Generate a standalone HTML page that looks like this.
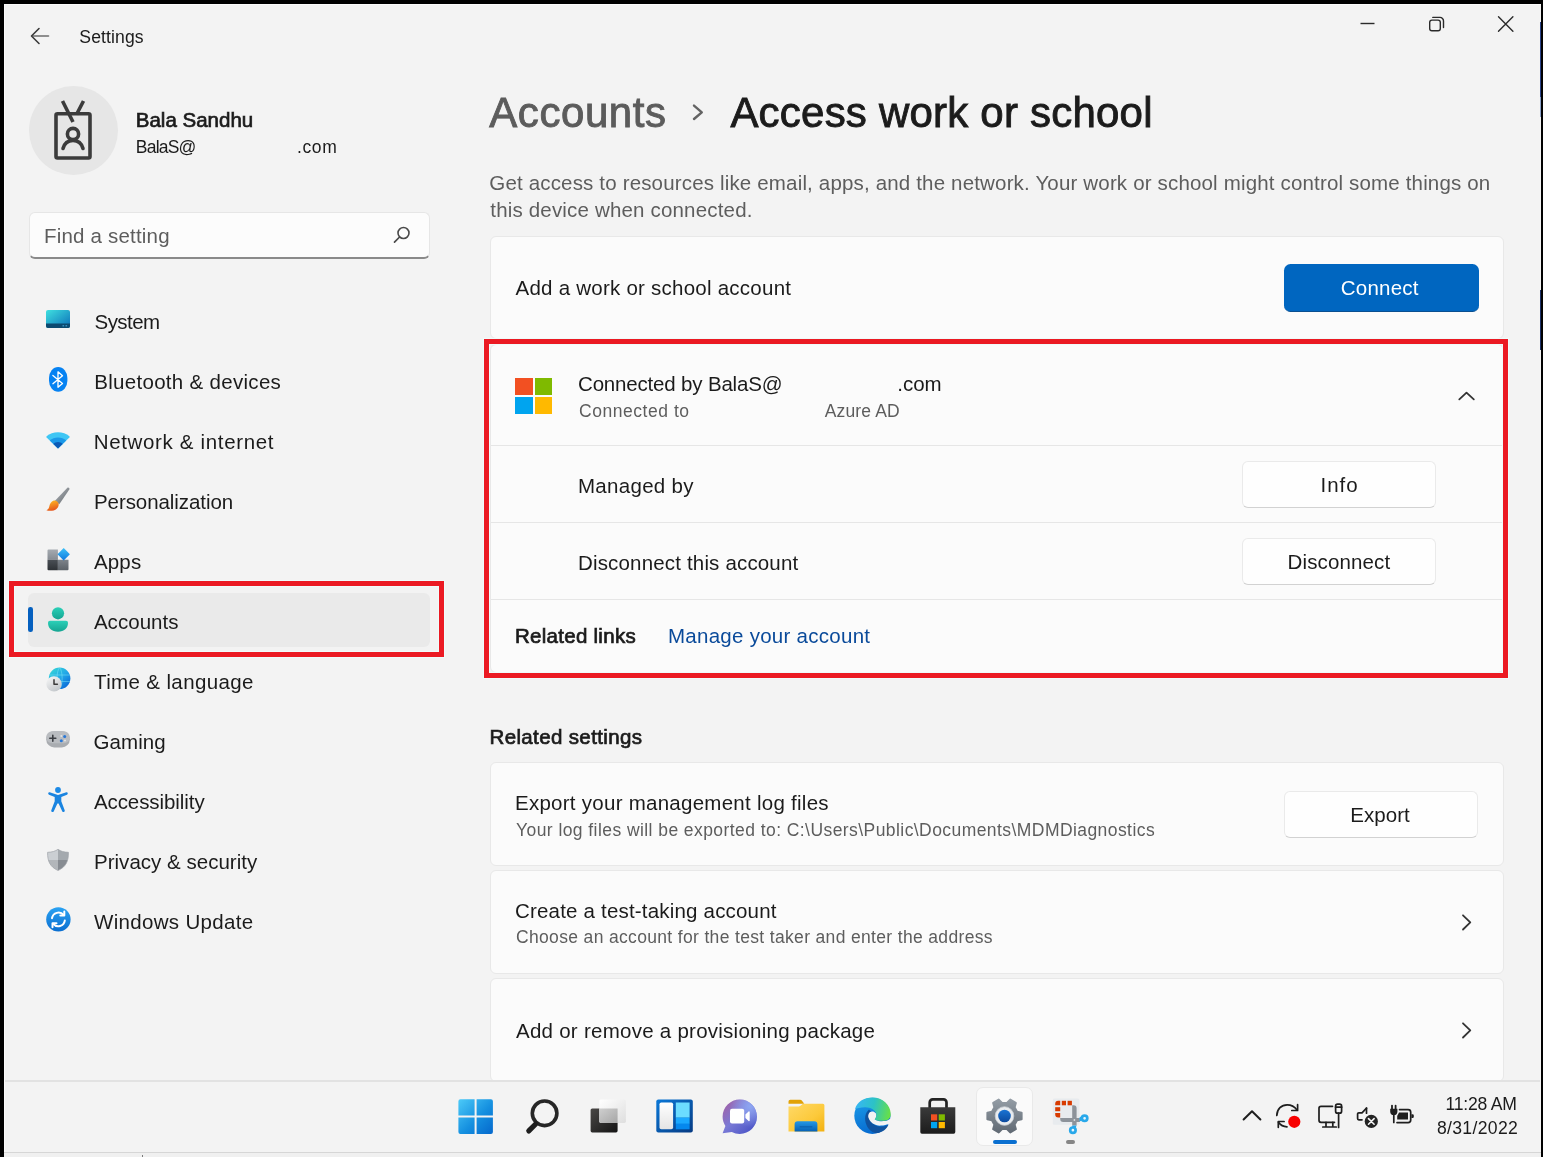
<!DOCTYPE html>
<html lang="en">
<head>
<meta charset="utf-8">
<title>Settings - Access work or school</title>
<style>
html,body{margin:0;padding:0;background:#f3f3f3;}
body{width:1543px;height:1157px;overflow:hidden;font-family:"Liberation Sans",sans-serif;}
#root{position:relative;width:1543px;height:1157px;overflow:hidden;background:#f3f3f3;}
#root>*{position:absolute;box-sizing:border-box;}
#txt{left:0;top:0;width:1543px;height:1157px;will-change:transform;filter:blur(0.45px);}
.t{position:absolute;white-space:pre;line-height:1;font-family:"Liberation Sans",sans-serif;}
.card{background:#fbfbfb;border:1px solid #e8e8e8;border-radius:6px;}
.btn{background:#fefefe;border:1px solid #eaeaea;border-bottom-color:#d2d2d2;border-radius:6px;}
.red{border:5px solid #eb1a23;box-shadow:0 0 0 1px rgba(240,252,252,.9),inset 0 0 0 1px rgba(240,252,252,.9);}
svg{display:block;overflow:visible;}
</style>
</head>
<body>
<div id="root">
<!-- window frame -->
<div style="left:0;top:0;width:1543px;height:4px;background:#000"></div>
<div style="left:0;top:0;width:4px;height:1157px;background:#000"></div>
<div style="left:1541px;top:0;width:2px;height:1157px;background:#000"></div>
<div style="left:4px;top:4px;width:1537px;height:1px;background:#fbfbfb"></div>
<div style="left:4px;top:4px;width:1px;height:1149px;background:#fbfbfb"></div>
<div style="left:1540px;top:22px;width:1px;height:75px;background:#2a4288"></div>
<div style="left:1540px;top:97px;width:1px;height:20px;background:#8aa0c8"></div>
<div style="left:1540px;top:290px;width:1px;height:60px;background:#1c3068"></div>
<!-- back arrow -->
<svg style="left:29px;top:26px" width="22" height="20" viewBox="0 0 22 20"><path d="M19.5 10H4" fill="none" stroke="#6e6e6e" stroke-width="1.6" stroke-linecap="round"/><path d="M10 2.5L2.5 10l7.5 7.5" fill="none" stroke="#3a3a3a" stroke-width="1.6" stroke-linecap="round" stroke-linejoin="round"/></svg>
<!-- caption buttons -->
<svg style="left:1359px;top:14.600px" width="18" height="18" viewBox="0 0 18 18"><path d="M1.500 8.500h14" stroke="#2a2a2a" stroke-width="1.400" fill="none"/></svg>
<svg style="left:1428px;top:15px" width="18" height="18" viewBox="0 0 18 18"><rect x="1.700" y="5.100" width="10.600" height="10.700" rx="2.200" fill="none" stroke="#2a2a2a" stroke-width="1.400"/><path d="M4.800 2.400h7.200a3.500 3.500 0 0 1 3.500 3.500V12.600" fill="none" stroke="#2a2a2a" stroke-width="1.400" stroke-linecap="round"/></svg>
<svg style="left:1497px;top:15px" width="18" height="18" viewBox="0 0 18 18"><path d="M1.500 1.800l14.400 14.400M15.900 1.800l-14.400 14.400" stroke="#2a2a2a" stroke-width="1.400" stroke-linecap="round" fill="none"/></svg>
<!-- avatar -->
<div style="left:28.500px;top:85.500px;width:89px;height:89px;border-radius:50%;background:#e6e6e6"></div>
<svg style="left:50px;top:97px" width="46" height="66" viewBox="0 0 46 66">
  <g fill="none" stroke="#3b3b3b" stroke-width="3.600" stroke-linejoin="round" stroke-linecap="butt">
    <rect x="6" y="16.800" width="34" height="44.200" rx="1.500"/>
    <path d="M12.500 4l10.500 21M33.500 4l-7 13.500"/>
    <circle cx="23" cy="37" r="5.600"/>
    <path d="M13 51.500c1.500-5.500 5.500-8 10-8s8.500 2.500 10 8" stroke-linecap="round"/>
  </g>
</svg>
<!-- search box -->
<div style="left:29px;top:212px;width:400.500px;height:46.500px;background:#fcfcfc;border:1px solid #e6e6e6;border-bottom:2px solid #8a8a8a;border-radius:6px"></div>
<svg style="left:392px;top:225px" width="20" height="20" viewBox="0 0 20 20"><circle cx="11.500" cy="8" r="5.500" fill="none" stroke="#4a4a4a" stroke-width="1.600"/><path d="M7.600 12L2.500 17.200" stroke="#4a4a4a" stroke-width="1.700" stroke-linecap="round"/></svg>
<!-- selected nav item -->
<div style="left:28px;top:592.500px;width:402px;height:54px;background:#eaeaea;border-radius:6px"></div>
<div style="left:28px;top:607.200px;width:4.600px;height:24.400px;background:#0560bf;border-radius:2.300px"></div>
<div class="red" style="left:9px;top:581px;width:435px;height:76px"></div>
<!-- nav icons -->
<!-- system -->
<svg style="left:46px;top:310px" width="24" height="18" viewBox="0 0 24 18"><defs><linearGradient id="gsys" x1="0" y1="0" x2="1" y2="1"><stop offset="0" stop-color="#3fe0e0"/><stop offset="1" stop-color="#0b6fb8"/></linearGradient></defs><rect x="0" y="0" width="24" height="18" rx="2" fill="url(#gsys)"/><path d="M0 13.500h24V16a2 2 0 0 1-2 2H2a2 2 0 0 1-2-2z" fill="#0c4a70"/><rect x="16.500" y="15.200" width="1.600" height="1.200" fill="#3fa0d0"/><rect x="19.500" y="15.200" width="1.600" height="1.200" fill="#3fa0d0"/></svg>
<!-- bluetooth -->
<svg style="left:48.800px;top:366.900px" width="18.400" height="24.800" viewBox="0 0 18.400 24.800"><rect x="0" y="0" width="18.400" height="24.800" rx="9.200" ry="11" fill="#0682f2"/><path d="M3.900 8.500L13.500 16.500 9 20.200V4.800L13.500 8.800 3.900 16.700" fill="none" stroke="#fff" stroke-width="1.350" stroke-linejoin="round" stroke-linecap="round"/></svg>
<!-- network -->
<svg style="left:46px;top:431.500px" width="24" height="17" viewBox="0 0 24 17"><path d="M12 16.400L0.600 5.600C0.200 5.200 0.200 4.600 0.600 4.200 3.600 1.600 7.600 0.200 12 0.200s8.400 1.400 11.400 4c0.400 0.400 0.400 1 0 1.400z" fill="#3ec6f4"/><path d="M12 16.400L3.800 8.600C6 6.600 8.800 5.400 12 5.400s6 1.200 8.200 3.200z" fill="#1a98e8"/><path d="M12 16.400L7.400 12c1.200-1.200 2.800-1.900 4.600-1.900s3.400 0.700 4.600 1.900z" fill="#0a5ab6"/></svg>
<!-- personalization -->
<svg style="left:46px;top:487px" width="25" height="25" viewBox="0 0 25 25"><defs><linearGradient id="gbr1" x1="0" y1="0" x2="1" y2="1"><stop offset="0" stop-color="#b4b9be"/><stop offset="1" stop-color="#62676c"/></linearGradient><linearGradient id="gbr2" x1="0.300" y1="0" x2="0.600" y2="1"><stop offset="0" stop-color="#ffb824"/><stop offset="1" stop-color="#e4501c"/></linearGradient></defs><path d="M21.400 0.800c0.900-0.900 2.600 0.400 1.900 1.600L13.300 17.200l-4.600-3.300z" fill="url(#gbr1)"/><path d="M7.800 13.600c2-0.500 4.400 1 4.800 3.200 0.500 2.900-1.500 5.600-4.900 6.600-2.600 0.700-5.600 0.600-7.300-0.200 1.600-0.600 2.400-1.600 2.800-3.400 0.500-2.600 1.800-5.500 4.600-6.200z" fill="url(#gbr2)"/></svg>
<!-- apps -->
<svg style="left:47px;top:547px" width="24" height="24" viewBox="0 0 24 24"><defs><linearGradient id="gap1" x1="0" y1="0" x2="0" y2="1"><stop offset="0" stop-color="#a6abb1"/><stop offset="1" stop-color="#858b92"/></linearGradient><linearGradient id="gap2" x1="0" y1="0" x2="0" y2="1"><stop offset="0" stop-color="#4a4f55"/><stop offset="1" stop-color="#2e3236"/></linearGradient><linearGradient id="gap3" x1="0" y1="0" x2="0" y2="1"><stop offset="0" stop-color="#7d838a"/><stop offset="1" stop-color="#5c6268"/></linearGradient><linearGradient id="gap4" x1="0" y1="0" x2="0" y2="1"><stop offset="0" stop-color="#3cc0f8"/><stop offset="1" stop-color="#0d78de"/></linearGradient></defs><path d="M0.500 3.400a1 1 0 0 1 1-1h9.400v10.400H0.500z" fill="url(#gap1)"/><path d="M0.500 12.800h10.400v10.400H1.500a1 1 0 0 1-1-1z" fill="url(#gap2)"/><path d="M10.900 12.800h10.600v9.400a1 1 0 0 1-1 1H10.900z" fill="url(#gap3)"/><path d="M16.700 1.100l6.200 6.200-6.200 6.200-6.200-6.200z" fill="url(#gap4)"/></svg>
<!-- accounts -->
<svg style="left:47px;top:607px" width="22" height="25" viewBox="0 0 22 25"><defs><linearGradient id="gacc" x1="0" y1="0" x2="0" y2="1"><stop offset="0" stop-color="#2bd0b8"/><stop offset="1" stop-color="#16a592"/></linearGradient></defs><circle cx="11" cy="6.300" r="6.100" fill="url(#gacc)"/><path d="M3 13.800h16a2 2 0 0 1 2 2c0 5.400-3.800 8.900-10 8.900S1 21.200 1 15.800a2 2 0 0 1 2-2z" fill="url(#gacc)"/></svg>
<!-- time & language -->
<svg style="left:46px;top:666.500px" width="25" height="25" viewBox="0 0 25 25"><defs><linearGradient id="gtl" x1="0.150" y1="0.100" x2="0.850" y2="0.900"><stop offset="0" stop-color="#34d0d8"/><stop offset="0.500" stop-color="#22a8e8"/><stop offset="1" stop-color="#0c6cd8"/></linearGradient><linearGradient id="gtl2" x1="0" y1="0" x2="0.600" y2="1"><stop offset="0" stop-color="#fafafa"/><stop offset="1" stop-color="#c4c8cc"/></linearGradient></defs><circle cx="13.600" cy="11.300" r="10.800" fill="url(#gtl)"/><path d="M13.600 0.500c-3.400 3.400-3.400 18.200 0 21.600M13.600 0.500c3.400 3.400 3.400 18.200 0 21.600M3.400 8h20.500M3.600 14.500h20.300" fill="none" stroke="#7fe4f4" stroke-width="0.900" opacity="0.550"/><circle cx="8" cy="16.900" r="7.700" fill="url(#gtl2)"/><path d="M8 12.800v4.400h3.400" fill="none" stroke="#3a3a3a" stroke-width="1.500" stroke-linecap="round" stroke-linejoin="round"/></svg>
<!-- gaming -->
<svg style="left:46px;top:731px" width="24" height="17" viewBox="0 0 24 17"><rect x="0.200" y="0.200" width="23.600" height="16.200" rx="8" fill="#a9acb0"/><rect x="0.200" y="0.200" width="23.600" height="12" rx="6" fill="#b9bcc0"/><path d="M6.800 4.300v6M3.800 7.300h6" stroke="#3c3f44" stroke-width="1.600" stroke-linecap="round"/><circle cx="15.300" cy="9.800" r="1.500" fill="#2878d8"/><circle cx="18.700" cy="5.500" r="1.500" fill="#2878d8"/><circle cx="15.300" cy="5" r="1" fill="#e4e4e4"/><circle cx="19" cy="9.500" r="1" fill="#e4e4e4"/></svg>
<!-- accessibility -->
<svg style="left:48px;top:786.500px" width="20" height="26" viewBox="0 0 20 26"><circle cx="10" cy="3" r="2.900" fill="#1c8ae6"/><path d="M1.700 5.300c-1.400-0.500-2.200 1.800-0.700 2.400l5.700 2.300v4.200l-3.400 9c-0.600 1.700 1.800 2.600 2.500 1L9.400 16.500h1.200l3.600 7.700c0.700 1.600 3.100 0.700 2.500-1l-3.400-9V10l5.700-2.300c1.500-0.600 0.700-2.900-0.700-2.400L10 8z" fill="#1a84e0"/></svg>
<!-- privacy -->
<svg style="left:47px;top:848.500px" width="22" height="22" viewBox="0 0 22 22"><defs><clipPath id="cpv"><path d="M11 0.300c2.800 2 6 2.900 10.400 3 0.300 8.800-2.600 14.800-10.400 18.200C3.200 18.100 0.300 12.100 0.600 3.300 5 3.200 8.200 2.300 11 0.300z"/></clipPath></defs><g clip-path="url(#cpv)"><rect x="0" y="0" width="11" height="11" fill="#cbcfd3"/><rect x="11" y="0" width="11" height="11" fill="#a4a9ae"/><rect x="0" y="11" width="11" height="11" fill="#b2b6ba"/><rect x="11" y="11" width="11" height="11" fill="#878c92"/></g><path d="M11 0.300c2.800 2 6 2.900 10.400 3 0.300 8.800-2.600 14.800-10.400 18.200C3.200 18.100 0.300 12.100 0.600 3.300 5 3.200 8.200 2.300 11 0.300z" fill="none" stroke="#9da2a8" stroke-width="0.700"/></svg>
<!-- windows update -->
<svg style="left:45.500px;top:907px" width="25" height="25" viewBox="0 0 25 25"><defs><linearGradient id="gwu" x1="0" y1="0" x2="0" y2="1"><stop offset="0" stop-color="#2aa2f2"/><stop offset="1" stop-color="#0a6ed0"/></linearGradient></defs><circle cx="12.400" cy="12.400" r="12.200" fill="url(#gwu)"/><path d="M6 11.200a6.600 6.600 0 0 1 11.600-3.200M18.800 13.600a6.600 6.600 0 0 1-11.600 3.200" fill="none" stroke="#fff" stroke-width="2" stroke-linecap="round"/><path d="M18.300 4.600v4h-4M6.500 20.200v-4h4" fill="none" stroke="#fff" stroke-width="2" stroke-linecap="round" stroke-linejoin="round"/></svg>
<!-- heading chevron -->
<svg style="left:690px;top:102px" width="16" height="21" viewBox="0 0 16 21"><path d="M4 3.600L11.800 10.300 4 17" fill="none" stroke="#636363" stroke-width="2.400" stroke-linecap="round" stroke-linejoin="round"/></svg>
<!-- card 1 -->
<div class="card" style="left:490.400px;top:235.800px;width:1013.500px;height:103.500px"></div>
<div style="left:1283.500px;top:264px;width:195px;height:48px;background:#0066c0;border-radius:6.500px;border-bottom:1.500px solid #0a4f90"></div>
<!-- expander card -->
<div class="card" style="left:490.400px;top:343.800px;width:1013.500px;height:329px"></div>
<div style="left:491.400px;top:444.900px;width:1011.500px;height:1.300px;background:#e6e6e6"></div>
<div style="left:491.400px;top:521.900px;width:1011.500px;height:1.300px;background:#e6e6e6"></div>
<div style="left:491.400px;top:598.600px;width:1011.500px;height:1.300px;background:#e6e6e6"></div>
<div class="red" style="left:484px;top:339px;width:1024px;height:339px"></div>
<!-- microsoft logo -->
<div style="left:515px;top:378px;width:17.500px;height:17px;background:#f25022"></div>
<div style="left:534.500px;top:378px;width:17.500px;height:17px;background:#7fba00"></div>
<div style="left:515px;top:397px;width:17.500px;height:17px;background:#00a4ef"></div>
<div style="left:534.500px;top:397px;width:17.500px;height:17px;background:#ffb900"></div>
<!-- chevron up -->
<svg style="left:1456px;top:389px" width="22" height="14" viewBox="0 0 22 14"><path d="M3.300 10.300L10.500 3.600 17.800 10.300" fill="none" stroke="#333" stroke-width="1.800" stroke-linecap="round" stroke-linejoin="round"/></svg>
<!-- buttons -->
<div class="btn" style="left:1241.900px;top:460.800px;width:194.600px;height:47.500px"></div>
<div class="btn" style="left:1241.900px;top:537.500px;width:194.600px;height:47.500px"></div>
<!-- related settings cards -->
<div class="card" style="left:490.400px;top:762px;width:1013.500px;height:103.500px"></div>
<div class="btn" style="left:1283.700px;top:790.700px;width:194.300px;height:47.400px"></div>
<div class="card" style="left:490.400px;top:870px;width:1013.500px;height:103.500px"></div>
<svg style="left:1458px;top:912px" width="16" height="22" viewBox="0 0 16 22"><path d="M5 3.300L12.300 10.400 5 17.500" fill="none" stroke="#333" stroke-width="1.800" stroke-linecap="round" stroke-linejoin="round"/></svg>
<div class="card" style="left:490.400px;top:978px;width:1013.500px;height:103.500px"></div>
<svg style="left:1458px;top:1020px" width="16" height="22" viewBox="0 0 16 22"><path d="M5 3.300L12.300 10.400 5 17.500" fill="none" stroke="#333" stroke-width="1.800" stroke-linecap="round" stroke-linejoin="round"/></svg>
<!-- taskbar -->
<div style="left:5px;top:1080.500px;width:1535px;height:76.500px;background:#f3f3f3"></div>
<div style="left:5px;top:1080.300px;width:1535px;height:1.300px;background:#e2e2e2"></div>
<div style="left:4px;top:1152px;width:1537px;height:1px;background:#d6d6d6"></div>
<div style="left:4px;top:1153px;width:1537px;height:4px;background:#f0f0f0"></div>
<div style="left:142px;top:1155px;width:1px;height:2px;background:#7a7a7a"></div>
<!-- start -->
<svg style="left:458px;top:1099px" width="36" height="36" viewBox="0 0 36 36"><defs><linearGradient id="gst" x1="0" y1="0" x2="1" y2="1"><stop offset="0" stop-color="#4ccaf8"/><stop offset="0.550" stop-color="#1590e0"/><stop offset="1" stop-color="#0568cc"/></linearGradient></defs><path d="M2.400 0.300h14.200v16.300H0.400V2.300a2 2 0 0 1 2-2zM18.600 0.300h14.300a2 2 0 0 1 2 2v14.300H18.600zM0.400 18.500h16.200v16.400H2.400a2 2 0 0 1-2-2zM18.600 18.500h16.300v14.400a2 2 0 0 1-2 2H18.600z" fill="url(#gst)"/></svg>
<!-- search -->
<svg style="left:524px;top:1097px" width="38" height="38" viewBox="0 0 38 38"><circle cx="20.600" cy="16.300" r="12.300" fill="none" stroke="#262626" stroke-width="3.600"/><path d="M11.700 27L4.800 33.900" stroke="#1e1e1e" stroke-width="5.200" stroke-linecap="round"/></svg>
<!-- task view -->
<svg style="left:590px;top:1099px" width="37" height="34" viewBox="0 0 37 34"><defs><linearGradient id="gtv1" x1="0" y1="0" x2="1" y2="1"><stop offset="0" stop-color="#4a4846"/><stop offset="1" stop-color="#141414"/></linearGradient><linearGradient id="gtv2" x1="0" y1="0" x2="1" y2="1"><stop offset="0" stop-color="#ffffff"/><stop offset="1" stop-color="#dedede"/></linearGradient><linearGradient id="gtv3" x1="0" y1="0" x2="1" y2="1"><stop offset="0" stop-color="#cfcfcf"/><stop offset="1" stop-color="#a6a6a6"/></linearGradient></defs><rect x="0.600" y="9.400" width="27" height="24" rx="1.600" fill="url(#gtv1)"/><rect x="9.300" y="0.500" width="26.600" height="23.400" rx="1.600" fill="url(#gtv2)"/><path d="M9.300 9.400h18.300v14.500H10.900a1.600 1.600 0 0 1-1.600-1.600z" fill="url(#gtv3)"/></svg>
<!-- widgets -->
<svg style="left:656px;top:1099px" width="37" height="34" viewBox="0 0 37 34"><defs><linearGradient id="gwd" x1="0" y1="0" x2="1" y2="1"><stop offset="0" stop-color="#0a78d8"/><stop offset="1" stop-color="#063a82"/></linearGradient><linearGradient id="gwd2" x1="0" y1="0" x2="0" y2="1"><stop offset="0" stop-color="#ffffff"/><stop offset="1" stop-color="#e4e4e4"/></linearGradient></defs><rect x="0.300" y="0.500" width="36.500" height="33" rx="2" fill="url(#gwd)"/><rect x="3.500" y="3.500" width="13.600" height="26.800" rx="1.800" fill="url(#gwd2)"/><rect x="19.800" y="3.500" width="13.800" height="15.200" fill="#6cdcff"/><rect x="19.800" y="18.600" width="13.800" height="6.300" fill="#1aa8ff"/><rect x="19.800" y="24.800" width="13.800" height="5.500" fill="#0588ee"/></svg>
<!-- chat -->
<svg style="left:721px;top:1098.600px" width="38" height="36" viewBox="0 0 38 36"><defs><linearGradient id="gch" x1="0.150" y1="0.150" x2="0.850" y2="0.850"><stop offset="0" stop-color="#9a66b0"/><stop offset="0.450" stop-color="#7a7ad6"/><stop offset="1" stop-color="#5058c8"/></linearGradient><radialGradient id="gch2" cx="0.800" cy="0.200" r="0.600"><stop offset="0" stop-color="#8ea6f2"/><stop offset="1" stop-color="#8ea6f2" stop-opacity="0"/></radialGradient></defs><path d="M18.800 0.600c9.500 0 17.200 7.700 17.200 17.200S28.300 35 18.800 35c-2.900 0-5.600-0.700-8-2L1.600 34.200l2.800-7.200C2.600 24.300 1.600 21.200 1.600 17.800 1.600 8.300 9.300 0.600 18.800 0.600z" fill="url(#gch)"/><path d="M18.800 0.600c9.500 0 17.200 7.700 17.200 17.200S28.300 35 18.800 35c-2.900 0-5.600-0.700-8-2L1.600 34.200l2.800-7.200C2.600 24.300 1.600 21.200 1.600 17.800 1.600 8.300 9.300 0.600 18.800 0.600z" fill="url(#gch2)"/><rect x="9" y="9.800" width="14.200" height="14.600" rx="2" fill="#fff"/><path d="M24.400 15.400l3.200-3c0.400-0.400 1.100-0.100 1.100 0.500v8.600c0 0.600-0.700 0.900-1.100 0.500l-3.200-3z" fill="#fff"/></svg>
<!-- explorer -->
<svg style="left:788px;top:1099px" width="37" height="33" viewBox="0 0 37 33"><defs><linearGradient id="gex" x1="0" y1="0" x2="1" y2="1"><stop offset="0" stop-color="#ffd968"/><stop offset="0.600" stop-color="#fcc93a"/><stop offset="1" stop-color="#f2b010"/></linearGradient><linearGradient id="gex2" x1="0" y1="0" x2="0" y2="1"><stop offset="0" stop-color="#2498e6"/><stop offset="1" stop-color="#0560b4"/></linearGradient></defs><path d="M0.500 2.600a1.800 1.800 0 0 1 1.800-1.800h9.800c0.700 0 1.300 0.300 1.700 0.800l2.500 3.200H0.500z" fill="#e2a206"/><path d="M0.500 7.400h10.400c0.800 0 1.500-0.300 2-0.800l2-1.900h20a1.500 1.500 0 0 1 1.500 1.500v26.400H0.500z" fill="url(#gex)"/><path d="M6.600 32.600v-7.400a3 3 0 0 1 3-3h16.800a3 3 0 0 1 3 3v7.400z" fill="url(#gex2)"/><rect x="11.500" y="27" width="13" height="1.600" rx="0.800" fill="#0a58a4" opacity="0.600"/></svg>
<!-- edge -->
<svg style="left:854px;top:1097px" width="37" height="38" viewBox="0 0 37 38"><defs><linearGradient id="ged1" x1="0" y1="0.400" x2="1" y2="0.550"><stop offset="0" stop-color="#38b6f4"/><stop offset="0.500" stop-color="#2cc2c6"/><stop offset="0.800" stop-color="#4fd47a"/><stop offset="1" stop-color="#68e046"/></linearGradient><linearGradient id="ged2" x1="0.200" y1="0" x2="0.500" y2="1"><stop offset="0" stop-color="#1c9ce8"/><stop offset="1" stop-color="#066ad0"/></linearGradient></defs><circle cx="18.400" cy="18.800" r="18.100" fill="url(#ged2)"/><path d="M15 12.500C11 16 10 22 12.500 28c2 5 6.500 8.500 11.500 8 5-1 9-4.500 10.500-8.500-4.500 3-10.500 3-14.500 0S14.500 19 17 14.500z" fill="#10529e"/><path d="M18.100 14.400c-3.100 0-4.500 3.600-3.500 6.600 1.400 4.500 6.400 8 12.400 7.600 3-0.200 6-1 7.200-1.400l3.800 0.300v-6.800l-4.200 2.500c-3.800 1.300-9.800 1.400-12.800-0.800 1.500-1.900 1.800-4.400 1-5.800-1-1.600-2.400-2.200-3.900-2.200z" fill="#f3f3f3"/><path d="M1 12C3 5 10 0.600 18.500 0.600c10 0 18 7.400 18.200 16.400 0.100 4-2.200 6.500-6.700 6.800-4 0.200-8-0.400-9.400-1.400 1.400-1.600 2.200-3.900 1.600-5.800C21 13 16.500 10.200 11 10.300 6.500 10.400 3 11.300 1 12z" fill="url(#ged1)"/></svg>
<!-- store -->
<svg style="left:920px;top:1097px" width="36" height="38" viewBox="0 0 36 38"><defs><linearGradient id="gsto" x1="0" y1="0" x2="0" y2="1"><stop offset="0" stop-color="#3a3a3a"/><stop offset="1" stop-color="#1c1c1c"/></linearGradient></defs><path d="M9.700 11.500V5.400a3 3 0 0 1 3-3h10.800a3 3 0 0 1 3 3v6.100" fill="none" stroke="#232323" stroke-width="2.700"/><path d="M0.300 10.200h35v24.900a1.600 1.600 0 0 1-1.600 1.600H1.900a1.600 1.600 0 0 1-1.600-1.600z" fill="url(#gsto)"/><rect x="11" y="17.300" width="6.200" height="6.200" fill="#f25022"/><rect x="18.700" y="17.300" width="6.200" height="6.200" fill="#7fba00"/><rect x="11" y="25" width="6.200" height="6.200" fill="#00a4ef"/><rect x="18.700" y="25" width="6.200" height="6.200" fill="#ffb900"/></svg>
<!-- settings (active) -->
<div style="left:975.500px;top:1087px;width:57.500px;height:58.500px;background:#fafafa;border:1px solid #e9e9e9;border-radius:7px"></div>
<svg style="left:985px;top:1097px" width="39" height="38" viewBox="-19.500 -19 39 38"><defs><linearGradient id="ggr" gradientUnits="userSpaceOnUse" x1="0" y1="-18" x2="0" y2="18"><stop offset="0" stop-color="#959ea7"/><stop offset="1" stop-color="#5f6872"/></linearGradient><linearGradient id="ggr2" x1="0" y1="0" x2="0" y2="1"><stop offset="0" stop-color="#1a74d4"/><stop offset="1" stop-color="#0c4a9e"/></linearGradient></defs><path d="M2.52 -12.96L5.77 -16.31L11.24 -13.16L9.96 -8.66L12.48 -4.30L17.01 -3.15L17.01 3.15L12.48 4.30L9.96 8.66L11.24 13.16L5.77 16.31L2.52 12.96L-2.52 12.96L-5.77 16.31L-11.24 13.16L-9.96 8.66L-12.48 4.30L-17.01 3.15L-17.01 -3.15L-12.48 -4.30L-9.96 -8.66L-11.24 -13.16L-5.77 -16.31L-2.52 -12.96Z" fill="url(#ggr)" stroke="url(#ggr)" stroke-width="2.200" stroke-linejoin="round"/><circle r="9.300" fill="#e9ecef"/><circle r="9.300" fill="none" stroke="#c9ced4" stroke-width="0.800"/><circle r="6.300" fill="url(#ggr2)"/></svg>
<div style="left:992.500px;top:1140px;width:24px;height:4.400px;border-radius:2.200px;background:#0a6fd0"></div>
<!-- snipping tool -->
<svg style="left:1052px;top:1098px" width="38" height="37" viewBox="0 0 38 37"><rect x="0.800" y="0.500" width="26.500" height="26.200" rx="1.500" fill="#e8ebee"/><g fill="#d83b01"><path d="M3.200 7.300V5.800a3 3 0 0 1 3-3h2v4.500z"/><rect x="9.800" y="2.800" width="4.200" height="4.500"/><rect x="15.600" y="2.800" width="4.300" height="4.500"/><rect x="3.200" y="9.200" width="5" height="4"/><path d="M3.200 15.100h5v4.500h-2a3 3 0 0 1-3-3z"/></g><path d="M20.200 7.300h1.400a3 3 0 0 1 3 3v17.300h-4.400z" fill="#8d939a"/><path d="M8.200 20h19.700v4H11.200a3 3 0 0 1-3-3z" fill="#8d939a"/><circle cx="22.400" cy="22" r="0.900" fill="#d9dde1"/><circle cx="32.600" cy="20.300" r="2.700" fill="#eaf6fd" stroke="#28a8ea" stroke-width="2.700"/><circle cx="20.900" cy="32.200" r="2.700" fill="#eaf6fd" stroke="#28a8ea" stroke-width="2.700"/><path d="M27.500 19.500l2.500-1.500v4.500l-2.500 1zM20.200 27.500h4.400l-1 2.500h-3z" fill="#28a8ea"/></svg>
<div style="left:1066px;top:1140px;width:9px;height:4.400px;border-radius:2.200px;background:#868686"></div>
<!-- tray chevron -->
<svg style="left:1241px;top:1108px" width="22" height="14" viewBox="0 0 22 14"><path d="M2.600 11.500L11 3.200l8.400 8.300" fill="none" stroke="#1e1e1e" stroke-width="2" stroke-linecap="round" stroke-linejoin="round"/></svg>
<!-- sync -->
<svg style="left:1274px;top:1102px" width="28" height="28" viewBox="0 0 28 28"><g fill="none" stroke="#1e1e1e" stroke-width="1.700" stroke-linecap="round" stroke-linejoin="round"><path d="M2.800 13.500C3 7 7.500 2.800 13.200 2.800c4 0 7.400 1.900 9.600 5"/><path d="M23.600 2.700v5.800h-5.800"/><path d="M13 24.800c-3.600 0-6.600-1.700-8.500-4.500"/><path d="M4.300 25.300v-5.800h5.800"/></g><circle cx="20.300" cy="19.800" r="6.100" fill="#f80000"/></svg>
<!-- network -->
<svg style="left:1317px;top:1102px" width="27" height="28" viewBox="0 0 27 28"><g fill="none" stroke="#1e1e1e" stroke-width="1.700" stroke-linecap="round" stroke-linejoin="round"><path d="M15.500 4.300H4a2 2 0 0 0-2 2v12a2 2 0 0 0 2 2h13.500"/><path d="M9 20.300v4.500M15.800 20.300v4.500M5.800 25h13.500"/><rect x="18.600" y="2.200" width="6" height="9" rx="2"/><path d="M18.600 5.200h6"/><path d="M21.600 11.200v14.200"/></g></svg>
<!-- volume muted -->
<svg style="left:1355px;top:1105px" width="26" height="25" viewBox="0 0 26 25"><path d="M11.500 3.200L7 7.800H3.800a1.200 1.200 0 0 0-1.200 1.200v4.600a1.200 1.200 0 0 0 1.200 1.200H7" fill="none" stroke="#1e1e1e" stroke-width="1.700" stroke-linecap="round" stroke-linejoin="round"/><path d="M11.500 3.200v5" stroke="#1e1e1e" stroke-width="1.700" stroke-linecap="round"/><circle cx="16.300" cy="16.400" r="6.600" fill="#232323"/><path d="M13.500 13.600l5.600 5.600M19.100 13.600l-5.600 5.600" stroke="#f3f3f3" stroke-width="1.600" stroke-linecap="round"/></svg>
<!-- battery plugged -->
<svg style="left:1389px;top:1104px" width="27" height="21" viewBox="0 0 27 21"><path d="M3 1.600v3.600M6.600 1.600v3.600" stroke="#1e1e1e" stroke-width="1.800" stroke-linecap="round"/><path d="M1.200 4.800h7.200v2.600a3.600 3.600 0 0 1-7.200 0z" fill="#1e1e1e"/><path d="M4.800 10.500v8" stroke="#1e1e1e" stroke-width="1.700" stroke-linecap="round"/><path d="M10.500 5.600h8.600a2.600 2.600 0 0 1 2.600 2.600v7.800a2.600 2.600 0 0 1-2.600 2.600H8" fill="none" stroke="#1e1e1e" stroke-width="1.700" stroke-linecap="round"/><path d="M10 8.600h9v7H8.200v-3.500z" fill="#1e1e1e"/><path d="M22.400 10.300h1.200a1.200 1.200 0 0 1 1.200 1.200v1.200a1.200 1.200 0 0 1-1.200 1.200h-1.200z" fill="#1e1e1e"/></svg>

<!-- text -->
<div id="txt">
<div class="t" style="left:79.30px;top:29.20px;font-size:17.6px;color:#1b1b1b;letter-spacing:0.104px;">Settings</div>
<div class="t" style="left:135.80px;top:110.40px;font-size:20.5px;color:#1b1b1b;letter-spacing:-0.000px;-webkit-text-stroke:0.7px #1b1b1b;">Bala Sandhu</div>
<div class="t" style="left:135.80px;top:138.70px;font-size:17.5px;color:#1b1b1b;letter-spacing:-0.780px;">BalaS@</div>
<div class="t" style="left:297.00px;top:138.70px;font-size:17.5px;color:#1b1b1b;letter-spacing:0.618px;">.com</div>
<div class="t" style="left:44.00px;top:225.70px;font-size:20.5px;color:#5d5d5d;letter-spacing:0.195px;">Find a setting</div>
<div class="t" style="left:94.50px;top:311.50px;font-size:20.5px;color:#1b1b1b;letter-spacing:-0.534px;">System</div>
<div class="t" style="left:94.20px;top:371.50px;font-size:20.5px;color:#1b1b1b;letter-spacing:0.303px;">Bluetooth &amp; devices</div>
<div class="t" style="left:93.70px;top:431.50px;font-size:20.5px;color:#1b1b1b;letter-spacing:0.657px;">Network &amp; internet</div>
<div class="t" style="left:94.00px;top:491.50px;font-size:20.5px;color:#1b1b1b;letter-spacing:-0.076px;">Personalization</div>
<div class="t" style="left:93.90px;top:551.50px;font-size:20.5px;color:#1b1b1b;letter-spacing:0.175px;">Apps</div>
<div class="t" style="left:93.90px;top:611.50px;font-size:20.5px;color:#1b1b1b;letter-spacing:0.047px;">Accounts</div>
<div class="t" style="left:94.00px;top:671.50px;font-size:20.5px;color:#1b1b1b;letter-spacing:0.370px;">Time &amp; language</div>
<div class="t" style="left:93.60px;top:731.50px;font-size:20.5px;color:#1b1b1b;letter-spacing:0.044px;">Gaming</div>
<div class="t" style="left:93.90px;top:791.50px;font-size:20.5px;color:#1b1b1b;letter-spacing:-0.074px;">Accessibility</div>
<div class="t" style="left:94.00px;top:851.50px;font-size:20.5px;color:#1b1b1b;letter-spacing:0.021px;">Privacy &amp; security</div>
<div class="t" style="left:94.00px;top:911.50px;font-size:20.5px;color:#1b1b1b;letter-spacing:0.318px;">Windows Update</div>
<div class="t" style="left:489.30px;top:92.00px;font-size:42px;color:#5c5c5c;letter-spacing:0.563px;-webkit-text-stroke:0.9px #5c5c5c;">Accounts</div>
<div class="t" style="left:730.40px;top:92.00px;font-size:42px;color:#1b1b1b;letter-spacing:0.216px;-webkit-text-stroke:0.9px #1b1b1b;">Access work or school</div>
<div class="t" style="left:489.30px;top:173.20px;font-size:20.5px;color:#5d5d5d;letter-spacing:0.166px;">Get access to resources like email, apps, and the network. Your work or school might control some things on</div>
<div class="t" style="left:490.30px;top:200.20px;font-size:20.5px;color:#5d5d5d;letter-spacing:0.175px;">this device when connected.</div>
<div class="t" style="left:515.50px;top:278.20px;font-size:20.5px;color:#1b1b1b;letter-spacing:0.243px;">Add a work or school account</div>
<div class="t" style="left:1340.80px;top:278.20px;font-size:20.5px;color:#ffffff;letter-spacing:0.224px;">Connect</div>
<div class="t" style="left:578.00px;top:374.30px;font-size:20.5px;color:#1b1b1b;letter-spacing:-0.178px;">Connected by BalaS@</div>
<div class="t" style="left:897.30px;top:374.30px;font-size:20.5px;color:#1b1b1b;letter-spacing:-0.016px;">.com</div>
<div class="t" style="left:579.00px;top:402.80px;font-size:17.5px;color:#5d5d5d;letter-spacing:0.539px;">Connected to</div>
<div class="t" style="left:824.80px;top:402.80px;font-size:17.5px;color:#5d5d5d;letter-spacing:0.136px;">Azure AD</div>
<div class="t" style="left:578.00px;top:475.80px;font-size:20.5px;color:#1b1b1b;letter-spacing:0.291px;">Managed by</div>
<div class="t" style="left:1320.50px;top:475.00px;font-size:20.5px;color:#1b1b1b;letter-spacing:0.969px;">Info</div>
<div class="t" style="left:578.00px;top:552.80px;font-size:20.5px;color:#1b1b1b;letter-spacing:0.168px;">Disconnect this account</div>
<div class="t" style="left:1287.60px;top:551.70px;font-size:20.5px;color:#1b1b1b;letter-spacing:0.132px;">Disconnect</div>
<div class="t" style="left:515.00px;top:626.30px;font-size:20.5px;color:#1b1b1b;letter-spacing:0.274px;-webkit-text-stroke:0.7px #1b1b1b;">Related links</div>
<div class="t" style="left:668.00px;top:626.30px;font-size:20.5px;color:#0a4a9a;letter-spacing:0.269px;">Manage your account</div>
<div class="t" style="left:489.50px;top:726.80px;font-size:20.5px;color:#1b1b1b;letter-spacing:0.363px;-webkit-text-stroke:0.7px #1b1b1b;">Related settings</div>
<div class="t" style="left:515.00px;top:792.60px;font-size:20.5px;color:#1b1b1b;letter-spacing:0.264px;">Export your management log files</div>
<div class="t" style="left:516.00px;top:821.80px;font-size:17.5px;color:#5d5d5d;letter-spacing:0.432px;">Your log files will be exported to: C:\Users\Public\Documents\MDMDiagnostics</div>
<div class="t" style="left:1350.30px;top:804.80px;font-size:20.5px;color:#1b1b1b;letter-spacing:0.030px;">Export</div>
<div class="t" style="left:515.00px;top:900.70px;font-size:20.5px;color:#1b1b1b;letter-spacing:0.189px;">Create a test-taking account</div>
<div class="t" style="left:516.00px;top:929.30px;font-size:17.5px;color:#5d5d5d;letter-spacing:0.339px;">Choose an account for the test taker and enter the address</div>
<div class="t" style="left:516.00px;top:1020.60px;font-size:20.5px;color:#1b1b1b;letter-spacing:0.259px;">Add or remove a provisioning package</div>
<div class="t" style="left:1445.60px;top:1095.70px;font-size:17.6px;color:#1b1b1b;letter-spacing:-0.263px;">11:28 AM</div>
<div class="t" style="left:1436.90px;top:1119.70px;font-size:17.6px;color:#1b1b1b;letter-spacing:0.339px;">8/31/2022</div>
</div>
</div>
</body>
</html>
